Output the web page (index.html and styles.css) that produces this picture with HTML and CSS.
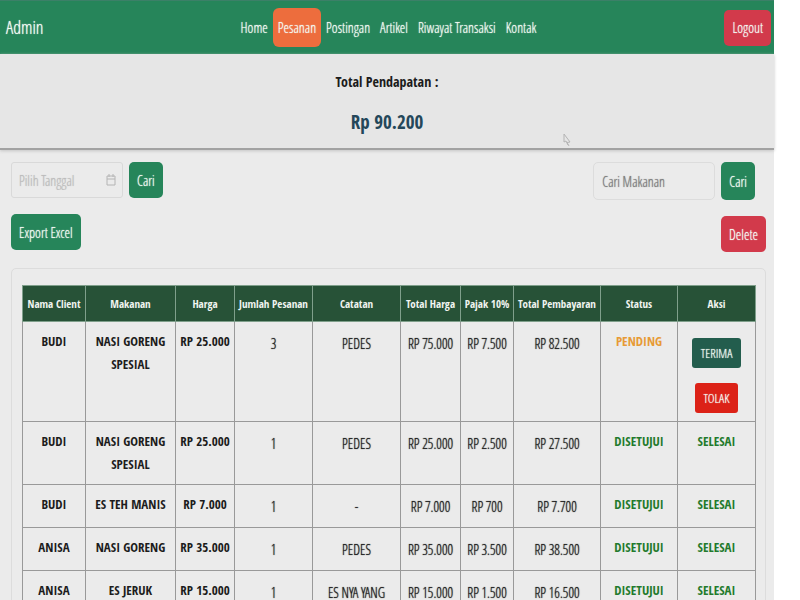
FILE: index.html
```html
<!DOCTYPE html>
<html lang="id">
<head>
<meta charset="utf-8">
<meta name="viewport" content="width=device-width, initial-scale=1">
<title>Admin</title>
<link rel="stylesheet" href="styles.css">
</head>
<body>
<div class="app">
  <header class="navbar">
    <a class="brand" href="#">Admin</a>
    <nav class="menu">
      <a href="#">Home</a>
      <a class="active" href="#">Pesanan</a>
      <a href="#">Postingan</a>
      <a href="#">Artikel</a>
      <a href="#">Riwayat Transaksi</a>
      <a href="#">Kontak</a>
    </nav>
    <button class="btn danger" type="button">Logout</button>
  </header>

  <section class="summary">
    <h1>Total Pendapatan :</h1>
    <p>Rp 90.200</p>
    <svg class="pointer" viewBox="0 0 12 16" aria-hidden="true"><path d="M3 2l6 8-3 .5 2 3.500M3 2v8l2-1 2 4"/></svg>
  </section>

  <main>
    <div class="tools">
      <div class="stack">
        <form class="row">
          <div class="date">
            <input type="text" placeholder="Pilih Tanggal" aria-label="Pilih Tanggal">
            <svg viewBox="0 0 10 14" aria-hidden="true"><path d="M1 3h8v9h-8zM1 6h8M3 1v3M7 1v3"/></svg>
          </div>
          <button class="btn" type="button">Cari</button>
        </form>
        <button class="btn" type="button">Export Excel</button>
      </div>
      <div class="stack right">
        <form class="row">
          <input class="search" type="text" placeholder="Cari Makanan" aria-label="Cari Makanan">
          <button class="btn tall" type="button">Cari</button>
        </form>
        <button class="btn danger" type="button">Delete</button>
      </div>
    </div>

    <div class="card">
      <table>
        <colgroup>
          <col class="c-name"><col class="c-food"><col class="c-price"><col class="c-count"><col class="c-note">
          <col class="c-total"><col class="c-tax"><col class="c-pay"><col class="c-status"><col class="c-action">
        </colgroup>
        <thead>
          <tr><th>Nama Client</th><th>Makanan</th><th>Harga</th><th>Jumlah Pesanan</th><th>Catatan</th><th>Total Harga</th><th>Pajak 10%</th><th>Total Pembayaran</th><th>Status</th><th>Aksi</th></tr>
        </thead>
        <tbody>
          <tr><td class="strong">BUDI</td><td class="strong">NASI GORENG SPESIAL</td><td class="strong">RP 25.000</td><td>3</td><td>PEDES</td><td>RP 75.000</td><td>RP 7.500</td><td>RP 82.500</td><td class="strong pending">PENDING</td><td class="actions"><button class="small accept" type="button">TERIMA</button><button class="small reject" type="button">TOLAK</button></td></tr>
          <tr><td class="strong">BUDI</td><td class="strong">NASI GORENG SPESIAL</td><td class="strong">RP 25.000</td><td>1</td><td>PEDES</td><td>RP 25.000</td><td>RP 2.500</td><td>RP 27.500</td><td class="strong done">DISETUJUI</td><td class="strong done">SELESAI</td></tr>
          <tr><td class="strong">BUDI</td><td class="strong">ES TEH MANIS</td><td class="strong">RP 7.000</td><td>1</td><td>-</td><td>RP 7.000</td><td>RP 700</td><td>RP 7.700</td><td class="strong done">DISETUJUI</td><td class="strong done">SELESAI</td></tr>
          <tr><td class="strong">ANISA</td><td class="strong">NASI GORENG</td><td class="strong">RP 35.000</td><td>1</td><td>PEDES</td><td>RP 35.000</td><td>RP 3.500</td><td>RP 38.500</td><td class="strong done">DISETUJUI</td><td class="strong done">SELESAI</td></tr>
          <tr><td class="strong">ANISA</td><td class="strong">ES JERUK</td><td class="strong">RP 15.000</td><td>1</td><td>ES NYA YANG</td><td>RP 15.000</td><td>RP 1.500</td><td>RP 16.500</td><td class="strong done">DISETUJUI</td><td class="strong done">SELESAI</td></tr>
        </tbody>
      </table>
    </div>
  </main>
</div>
</body>
</html>
```
FILE: styles.css
```css
* { box-sizing: border-box; }

body {
  margin: 0;
  height: 100vh;
  overflow: hidden;
  background: #fff;
  color: #1c1c1c;
  font: 14px/23px "Open Sans Condensed Light", "Roboto Condensed", Lato, sans-serif;
}

a { color: inherit; text-decoration: none; }
button, input { font: inherit; }

.navbar,
.btn,
.small,
input,
td { text-shadow: 0 0 1px currentColor; }

.app {
  margin-right: 26px;
  min-height: 100vh;
  background: #ebebeb;
}

.navbar {
  display: grid;
  grid-template-columns: 1fr auto 1fr;
  align-items: center;
  height: 54px;
  padding: 0 3px 0 6px;
  background: #26855a;
  border-top: 1px solid #3c8068;
  color: #f4faf4;
}

.navbar .btn { justify-self: end; }

.brand { font-size: 18px; }

.menu { display: flex; }

.menu a {
  padding: 8px 5px;
  border-radius: 6px;
}

.menu .active { background: #ed6d3d; }

.btn {
  height: 36px;
  padding: 0 8px;
  border: 0;
  border-radius: 5px;
  background: #26855a;
  color: #f4faf4;
}

.btn.tall { height: 38px; }
.btn.danger { background: #d23a4b; }

.summary {
  position: relative;
  padding: 16px 0 10px;
  background: #e6e6e6;
  border-bottom: 2px solid #a2a2a2;
  box-shadow: 0 1px 3px #c4c4c4;
  text-align: center;
}

.summary h1,
.summary p,
th,
.strong {
  font-family: "Open Sans Condensed", Lato, sans-serif;
  font-weight: bold;
  text-shadow: none;
}

.summary h1 {
  margin: 0;
  font-size: 14px;
  line-height: 24px;
}

.summary p {
  margin: 12px 0 0;
  color: #24475a;
  font-size: 19px;
  line-height: 32px;
}

.pointer {
  position: absolute;
  right: 201px;
  bottom: 0;
  width: 12px;
  height: 16px;
  fill: none;
  stroke: #b4b4b4;
}

main { padding: 12px 8px 0 11px; }

.tools {
  display: flex;
  justify-content: space-between;
}

.stack {
  display: flex;
  flex-direction: column;
  align-items: flex-start;
  gap: 16px;
}

.row { display: flex; gap: 6px; }

.date {
  display: flex;
  align-items: center;
  width: 112px;
  height: 36px;
  padding: 0 6px 0 7px;
  border: 1px solid #d9d9d9;
  border-radius: 3px;
}

.date input {
  flex: 1;
  min-width: 0;
  padding: 0;
  border: 0;
  background: none;
}

.date input::placeholder { color: #bcbcbc; }

.date svg {
  width: 10px;
  height: 14px;
  fill: none;
  stroke: #b4b4b4;
}

.search {
  width: 122px;
  height: 38px;
  padding: 0 8px;
  border: 1px solid #dcdcdc;
  border-radius: 5px;
  background: none;
}

.search::placeholder { color: #7c7c7c; }

.right .btn.danger { align-self: flex-end; }
.right .row { margin-right: 11px; }

.card {
  margin-top: 16px;
  padding: 16px 10px;
  border: 1px solid #dcdcdc;
  border-radius: 5px;
}

table {
  width: 100%;
  table-layout: fixed;
  border-collapse: collapse;
  text-align: center;
}

.c-name { width: 63px; }
.c-food { width: 90px; }
.c-price { width: 59px; }
.c-count { width: 78px; }
.c-note { width: 88px; }
.c-total { width: 60px; }
.c-tax { width: 53px; }
.c-pay { width: 87px; }
.c-status { width: 77px; }
.c-action { width: 78px; }

th {
  padding: 6px 0;
  border: 1px solid #7f9f8b;
  background: #275237;
  color: #f0f4f0;
  font-size: 11px;
  white-space: nowrap;
}

td {
  padding: 10px 3px 9px;
  border: 1px solid #999;
  vertical-align: top;
}

.strong {
  padding: 8px 3px;
  font-size: 13px;
}

.pending { color: #e79a35; }
.done { color: #237a2c; }

.actions { padding: 16px 0 8px; }

.small {
  display: block;
  height: 30px;
  margin: 0 auto;
  padding: 0 9px;
  border: 0;
  border-radius: 3px;
  color: #f4faf4;
  font-size: 13px;
}

.small + .small { margin-top: 15px; }
.accept { background: #235d4d; }
.reject { background: #dc2217; }
```
